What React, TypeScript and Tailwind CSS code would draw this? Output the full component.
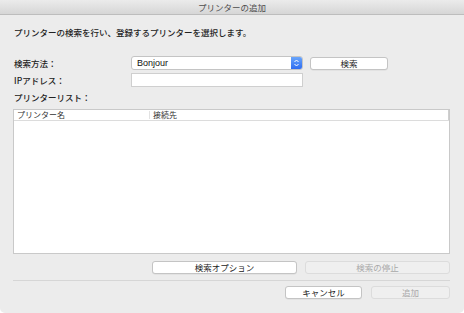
export default function App() {
  const btn =
    "h-[13px] flex items-center justify-center rounded-[3px] border border-[#c4c4c4] bg-white text-[8.5px] leading-none text-[#222] shadow-[0_0.5px_0_rgba(0,0,0,0.08)]";
  const btnDis =
    "h-[13px] flex items-center justify-center rounded-[3px] border border-[#dcdcdc] bg-[#efefef] text-[8.5px] leading-none text-[#a9a9a9]";
  return (
    <div className="w-[464px] h-[313px] bg-white">
      <div className="w-[464px] h-[313px] bg-[#ececec] rounded-b-[5px] flex flex-col text-[#222] font-['Noto_Sans_CJK_JP','Noto_Sans',sans-serif]">
        <div className="h-[15px] shrink-0 bg-gradient-to-b from-[#ebebeb] to-[#d6d6d6] border-b border-[#bdbdbd] flex items-center justify-center text-[8.5px] leading-none text-[#4d4d4d]">
          プリンターの追加
        </div>
        <div className="flex-1 flex flex-col pl-[13px] pr-[14px]">
          <div className="mt-[11px] h-[12px] pl-[1px] text-[8.5px] leading-[12px] font-medium">
            プリンターの検索を行い、登録するプリンターを選択します。
          </div>
          <div className="mt-[18px] flex items-center h-[14px]">
            <div className="w-[118px] pl-[1px] text-[8.5px] leading-none font-medium">検索方法：</div>
            <div className="w-[172px] h-[14px] flex rounded-[3px] border border-[#c4c4c4] bg-white overflow-hidden">
              <div className="flex-1 flex items-center pl-[5px] text-[9px] leading-none font-['Liberation_Sans',sans-serif] text-[#111]">
                Bonjour
              </div>
              <div className="w-[11px] h-full bg-gradient-to-b from-[#6aa5fb] to-[#2f6cf1] flex items-center justify-center">
                <svg width="7" height="10" viewBox="0 0 7 10">
                  <path d="M1.5 4 L3.5 2 L5.5 4" fill="none" stroke="white" strokeWidth="1" />
                  <path d="M1.5 6 L3.5 8 L5.5 6" fill="none" stroke="white" strokeWidth="1" />
                </svg>
              </div>
            </div>
            <div className={btn + " ml-[7px] w-[78px]"}>検索</div>
          </div>
          <div className="mt-[3px] flex items-center h-[14px]">
            <div className="w-[118px] pl-[1px] text-[8.5px] leading-none font-medium">IPアドレス：</div>
            <div className="w-[172px] h-[14px] border border-[#cfcfcf] bg-white" />
          </div>
          <div className="mt-[4px] h-[12px] pl-[1px] text-[8.5px] leading-[12px] font-medium">
            プリンターリスト：
          </div>
          <div className="mt-[6px] h-[145px] border border-[#c9c9c9] bg-white flex flex-col">
            <div className="h-[11px] flex items-center border-b border-[#dcdcdc] text-[8px] leading-none text-[#333]">
              <div className="w-[135px] pl-[3px]">プリンター名</div>
              <div className="w-[1px] h-[8px] bg-[#e2e2e2]" />
              <div className="flex-1 pl-[3px]">接続先</div>
              <div className="w-[1px] h-full bg-[#cfcfcf]" />
            </div>
            <div className="flex-1" />
          </div>
          <div className="mt-[7px] flex justify-end gap-[8px]">
            <div className={btn + " w-[145px]"}>検索オプション</div>
            <div className={btnDis + " w-[145px]"}>検索の停止</div>
          </div>
          <div className="mt-[6px] h-[1px] bg-[#d6d6d6]" />
          <div className="mt-[5px] flex justify-end gap-[9px]">
            <div className={btn + " w-[77px]"}>キャンセル</div>
            <div className={btnDis + " w-[79px]"}>追加</div>
          </div>
        </div>
      </div>
    </div>
  );
}
